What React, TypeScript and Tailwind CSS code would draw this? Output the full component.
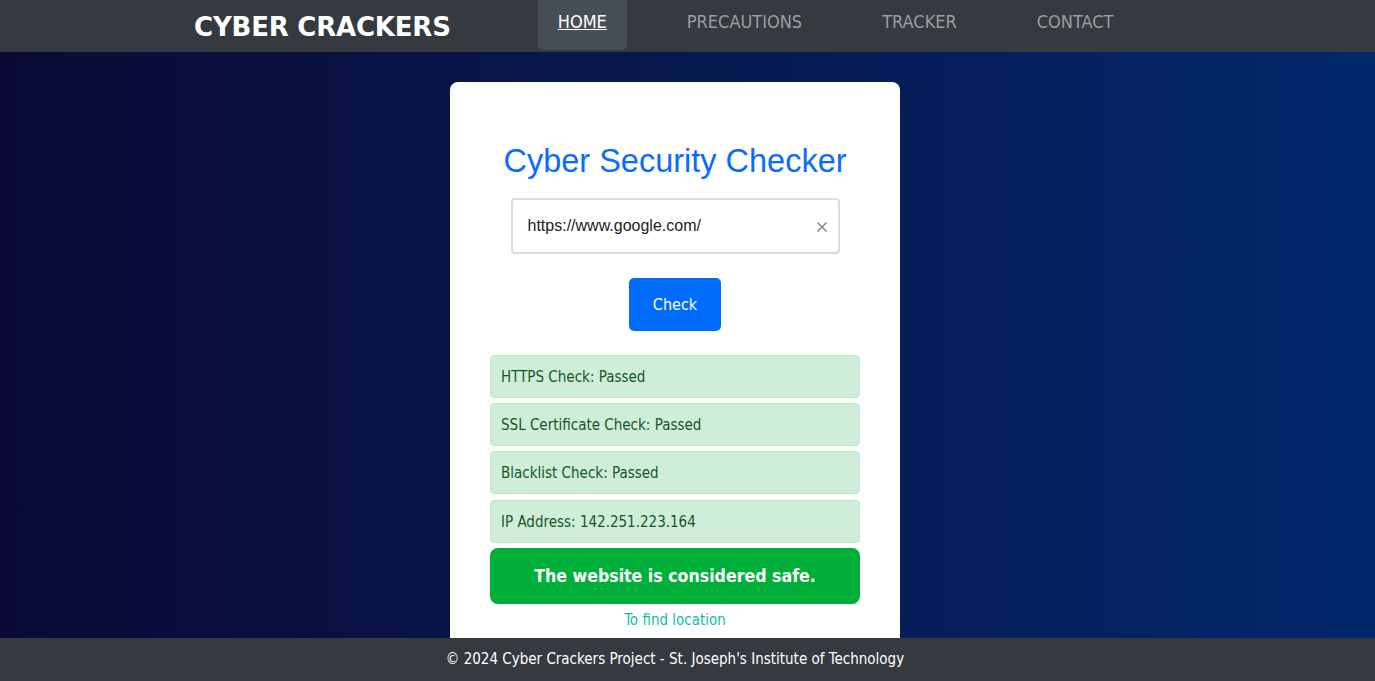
import React from "react";

const cond = { fontFamily: '"DejaVu Sans Condensed", "DejaVu Sans", Tahoma, sans-serif' };

export default function App() {
  const results = [
    "HTTPS Check: Passed",
    "SSL Certificate Check: Passed",
    "Blacklist Check: Passed",
    "IP Address: 142.251.223.164",
  ];
  return (
    <div className="h-screen flex flex-col overflow-hidden" style={cond}>
      <header className="h-[52px] shrink-0 bg-[#343a40] flex items-start pl-[194px]">
        <div className="h-[52px] flex items-center">
          <span
            className="text-white text-[26px] font-bold tracking-[-0.2px] pt-[2px]"
            style={{ fontFamily: '"DejaVu Sans", Tahoma, sans-serif' }}
          >
            CYBER CRACKERS
          </span>
        </div>
        <nav className="flex gap-[40px] ml-[87px]">
          <a className="h-[50px] px-[20px] pt-[10px] bg-[#484e55] rounded-b-[5px] text-white underline text-[18px] leading-[24px]">
            HOME
          </a>
          <a className="px-[20px] pt-[10px] text-[#9b9ea2] text-[18px] leading-[24px]">PRECAUTIONS</a>
          <a className="px-[20px] pt-[10px] text-[#9b9ea2] text-[18px] leading-[24px]">TRACKER</a>
          <a className="px-[20px] pt-[10px] text-[#9b9ea2] text-[18px] leading-[24px]">CONTACT</a>
        </nav>
      </header>

      <main className="flex-1 overflow-hidden bg-[linear-gradient(to_right,#0b0a36,#02286b)] flex justify-center pt-[30px] pr-[25px]">
        <div className="w-[450px] h-fit bg-white rounded-[8px] px-[40px] pt-[60px] pb-[40px] flex flex-col items-center">
          <h1
            className="text-[32.5px] leading-[38px] text-[#0a6cff]"
            style={{ fontFamily: '"Liberation Sans", Arial, sans-serif' }}
          >
            Cyber Security Checker
          </h1>
          <div className="mt-[18px] w-[329px] h-[56px] border-2 border-[#dcdcdc] rounded-[4px] flex items-center pl-[15px] pr-[10px]">
            <span
              className="flex-1 text-[16px] text-[#222]"
              style={{ fontFamily: '"Liberation Sans", Arial, sans-serif' }}
            >
              https://www.google.com/
            </span>
            <svg width="12" height="12" viewBox="0 0 12 12" className="mt-[2px]">
              <path d="M1.5 1.5 L10.5 10.5 M10.5 1.5 L1.5 10.5" stroke="#8a8a8a" strokeWidth="1.6" />
            </svg>
          </div>
          <button className="mt-[24px] w-[92px] h-[53px] bg-[#006cfe] rounded-[5px] text-white text-[16px]">
            Check
          </button>
          <div className="mt-[24px] w-full flex flex-col gap-[5px]">
            {results.map((r, i) => (
              <div
                key={r}
                className={
                  "h-[43px] bg-[#cfeed9] border border-[#bfe6cb] rounded-[4px] flex items-center px-[10px] pt-[1px] text-[15px] text-[#155724]" +
                  (i === 3 ? " mt-[1px]" : "")
                }
              >
                {r}
              </div>
            ))}
            <div className="h-[56px] bg-[#00b03b] rounded-[8px] flex items-center justify-center text-white text-[17.6px] font-bold">
              The website is considered safe.
            </div>
          </div>
          <a className="mt-[4px] text-[15px] leading-[24px] text-[#12bf9c]">To find location</a>
        </div>
      </main>

      <footer className="h-[43px] shrink-0 bg-[#343a40] flex items-center justify-center pr-[25px] text-white text-[15px]">
        © 2024 Cyber Crackers Project - St. Joseph's Institute of Technology
      </footer>
    </div>
  );
}
